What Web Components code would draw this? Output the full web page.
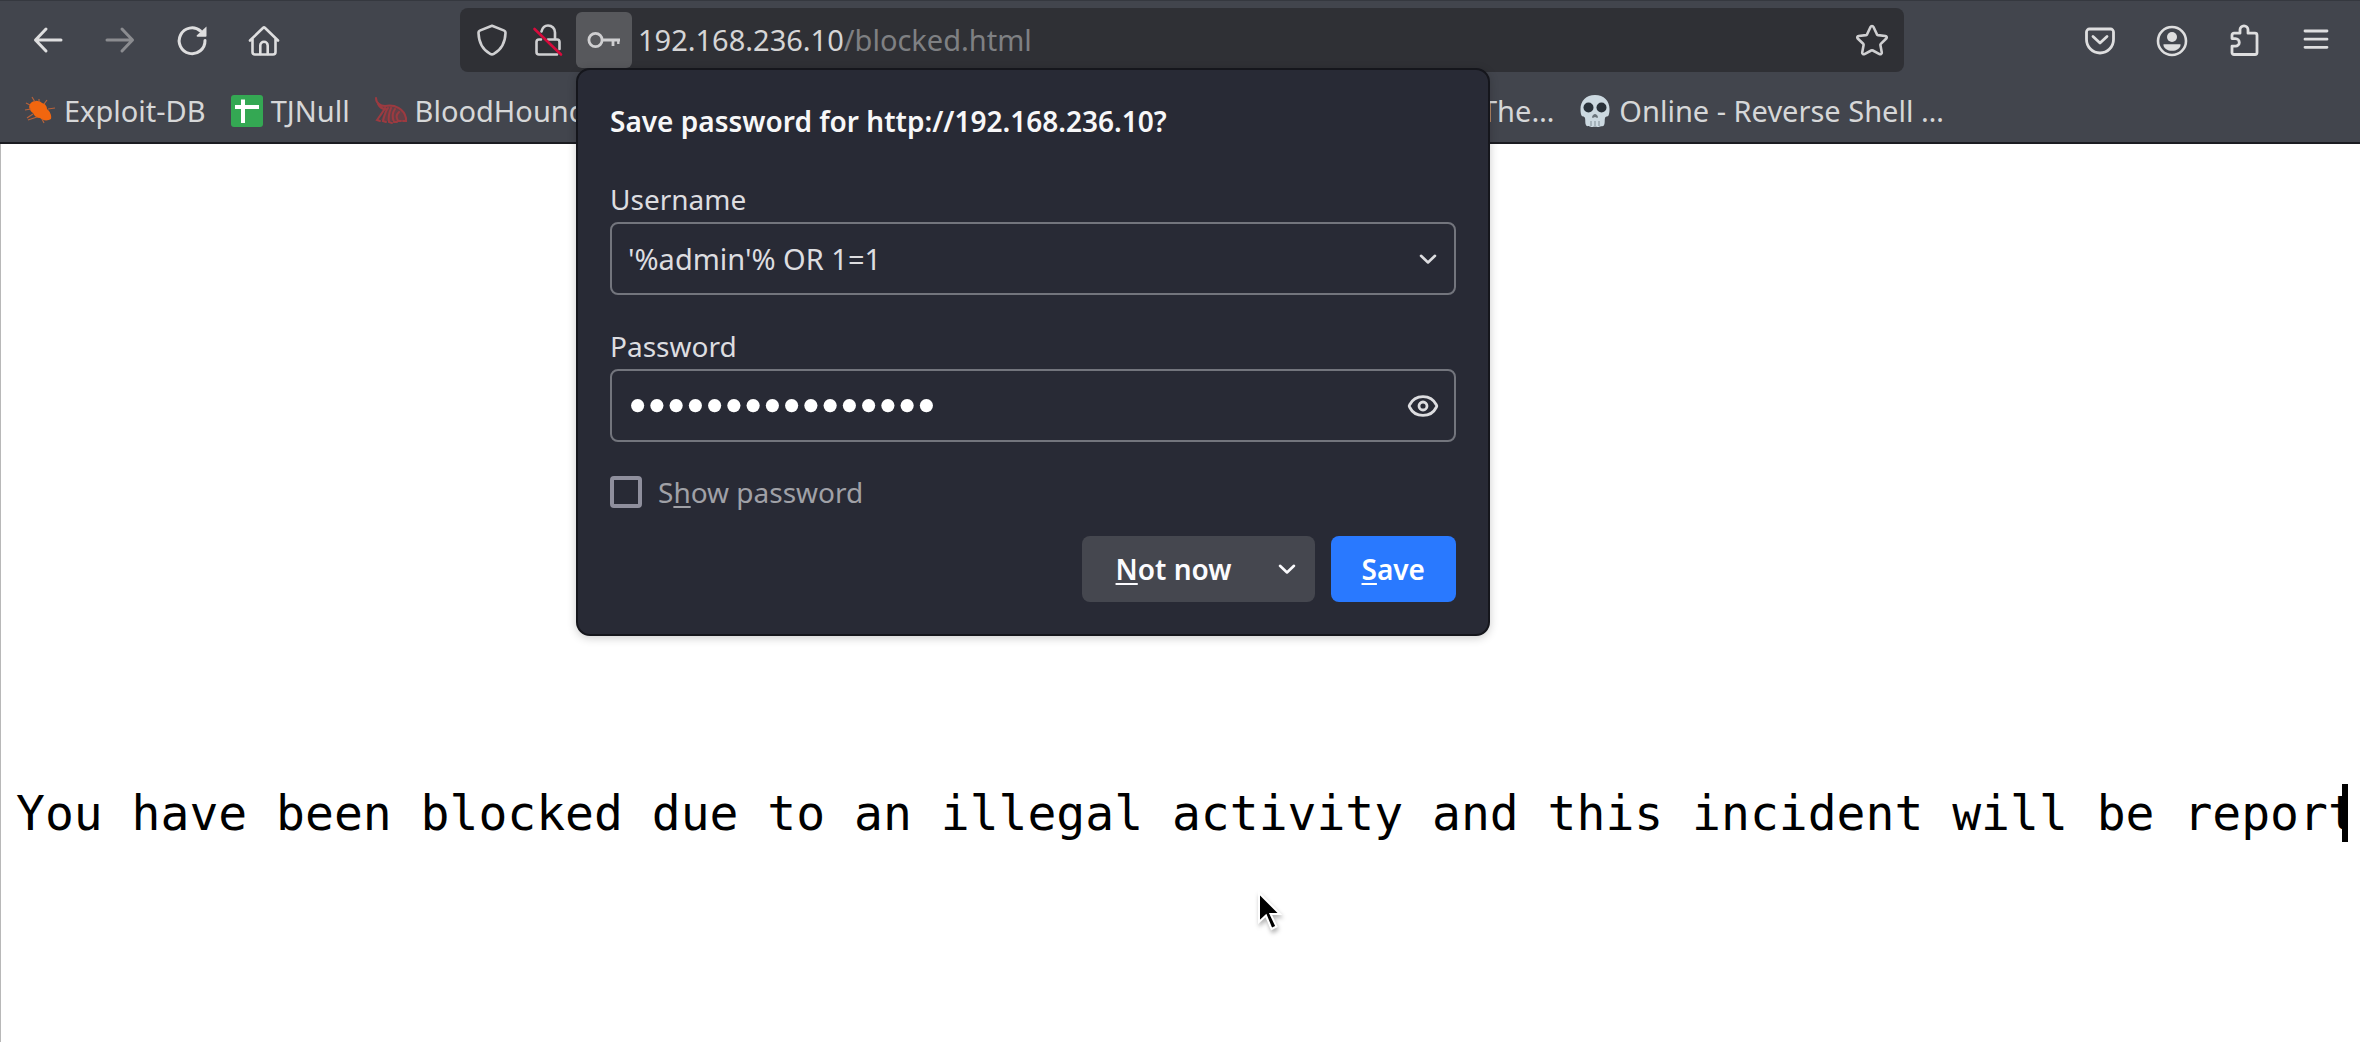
<!DOCTYPE html>
<html lang="en">
<head>
<meta charset="utf-8">
<title>192.168.236.10/blocked.html</title>
<style>
  html, body { margin: 0; height: 100%; }
  body { background: #fff; font-family: "Noto Sans", sans-serif; overflow: hidden; }
</style>
</head>
<body>
<browser-window></browser-window>

<script>
const ICONS = {
  back: '<g fill="none" stroke="currentColor" stroke-width="3" stroke-linecap="round" stroke-linejoin="round"><path d="M3.5 16H29M14 5 3.5 16 14 27"/></g>',
  forward: '<g fill="none" stroke="currentColor" stroke-width="3" stroke-linecap="round" stroke-linejoin="round"><path d="M28.500 16H3M18 5l10.500 11L18 27"/></g>',
  reload: '<path d="M24.500 7A12.900 12.900 0 1 0 29 16.500" fill="none" stroke="currentColor" stroke-width="3" stroke-linecap="round"/><path d="M30.500 2.500v9.500a.8.8 0 0 1-.8.8h-8.200c-.8 0-1.200-.9-.6-1.500z" fill="currentColor"/>',
  home: '<g fill="none" stroke="currentColor" stroke-width="2.600" stroke-linecap="round" stroke-linejoin="round"><path d="M2 16.500 15.200 3.800a1.200 1.200 0 0 1 1.600 0L30 16.500M4.500 15v13a2.500 2.500 0 0 0 2.500 2.500h18a2.500 2.500 0 0 0 2.500-2.500V15"/><path d="M12.300 30V21.500a3.700 3.700 0 0 1 7.400 0V30"/></g>',
  shield: '<path d="M16 1.800 27.700 6.400c1.200.5 1.900 1.300 1.800 2.600-.3 9.500-3.800 16.500-11.700 20.900a3.600 3.600 0 0 1-3.600 0C6.300 25.500 2.800 18.500 2.500 9c-.1-1.300.6-2.100 1.800-2.600z" fill="none" stroke="currentColor" stroke-width="2.600" stroke-linejoin="round"/>',
  lock: '<g fill="none" stroke="currentColor" stroke-width="2.600" stroke-linecap="round"><path d="M9.500 7.500C10.500 3.500 13 1.500 16 1.500c4 0 7 3 7 7V15"/><path d="M9 15.500H7a2.500 2.500 0 0 0-2.500 2.500v10A2.500 2.500 0 0 0 7 30.500h18M16 15.500h9a2.500 2.500 0 0 1 2.500 2.500v7"/></g><path d="M2.500 5 29 30.500" stroke="#d70b3c" stroke-width="2.600" stroke-linecap="round"/>',
  key: '<g fill="none" stroke="currentColor" stroke-width="2.800"><circle cx="7.500" cy="16" r="6.600"/><path d="M14 16h18M25 16v6"/></g><path d="M30.300 16v4" stroke="currentColor" stroke-width="2.400"/>',
  star: '<path d="m14.500 3-3.400 7.300a1.500 1.500 0 0 1-1.100.8l-7.400.9c-1.300.2-1.800 1.600-.9 2.500l5.500 5.300c.4.400.5.800.4 1.300l-1.400 7.300c-.2 1.400 1.100 2.300 2.300 1.700l6.700-3.600a1.700 1.700 0 0 1 1.600 0l6.700 3.600c1.200.6 2.500-.3 2.300-1.700l-1.400-7.300c-.1-.5 0-.9.4-1.300l5.500-5.300c.9-.9.4-2.300-.9-2.500l-7.400-.9a1.500 1.500 0 0 1-1.100-.8L17.500 3c-.6-1.300-2.400-1.300-3 0z" fill="none" stroke="currentColor" stroke-width="2.600" stroke-linejoin="round"/>',
  pocket: '<g fill="none" stroke="currentColor" stroke-width="2.800" stroke-linecap="round" stroke-linejoin="round"><path d="M5.500 5h21a3 3 0 0 1 3 3v7.500a13.500 13.500 0 0 1-27 0V8a3 3 0 0 1 3-3z"/><path d="m9 12.500 7 6.500 7-6.500"/></g>',
  account: '<circle cx="16" cy="17" r="14" fill="none" stroke="currentColor" stroke-width="2.600"/><circle cx="16" cy="13" r="5" fill="currentColor"/><path d="M7.500 20.200h17c.5 4-4 6.600-8.500 6.600s-9-2.600-8.500-6.600z" fill="currentColor"/>',
  puzzle: '<path d="M12 9.200V5.800a4 4 0 0 1 8 0v3.400h7a2 2 0 0 1 2 2v17.300a2 2 0 0 1-2 2H6a2 2 0 0 1-2-2v-6.300h3.500a3.800 3.800 0 0 0 0-7.600H4v-3.400a2 2 0 0 1 2-2z" fill="none" stroke="currentColor" stroke-width="2.800" stroke-linejoin="round"/>',
  menu: '<path d="M5 7h22M5 15.200h22M5 23.300h22" fill="none" stroke="currentColor" stroke-width="2.800" stroke-linecap="round"/>',
  eye: '<g fill="none" stroke="currentColor" stroke-width="2.800"><path d="M2.500 17c-.4-.6-.4-1.400 0-2C5 10 10 6.600 16 6.600s11 3.400 13.500 8.400c.4.600.4 1.400 0 2C27 22 22 25.400 16 25.400S5 22 2.500 17z"/><circle cx="16" cy="16" r="4"/></g>',
  chevron: '<path d="m9 12.800 7 6.700 7-6.700" fill="none" stroke="currentColor" stroke-width="2.600" stroke-linecap="round" stroke-linejoin="round"/>',
  bug: '<path d="M6 9c3-4 9-4 12-1 4 1 5 4 5 6 3 2 5 7 4 10-3 2-8 2-11-1-3 0-6-2-7-5-3-2-5-6-3-9z" fill="#f2660f"/><path d="M11 7 8 2M15 7V4M20 9l3-4M24 14l7-1M6 10 2 8M7 14l-6 1M9 19l-6 4M13 22l-9 3M18 24l2 4" fill="none" stroke="#b8623a" stroke-width="1.200"/>',
  sheet: '<rect width="32" height="32" rx="3" fill="#34a853"/><path d="M12 4.500V28M4 12h24" stroke="#fff" stroke-width="4" fill="none"/>',
  hound: '<path d="M2 4c1 4 4 7 9 7 9-2 18 3 20 12v3H9L6 25l4-9C5 15 2 10 2 4z" fill="#8f3a40" opacity=".45"/><g fill="none" stroke="#9c3a40" stroke-width="2" stroke-linecap="round"><path d="M1 3c0 5 4 8 9 8 10-2 19 3 21 12v3h-3M3 9c2 4 5 5 8 5"/><path d="M10 13c-2 4-5 8-8 12l3 1M13 13c-3 4-4 9-5 13l3 1M16 13c-2 5-3 9-2 14l3 1M20 14c-3 4-3 8-1 13l3 0M24 17c-3 3-3 5-1 9l3 0"/></g>',
  skull: '<path d="M16 0C7 0 1.500 6 1.500 14c0 3 .3 5 1 6.500C3.500 22 5.500 21 6 23c.6 2.500-.2 5 1 7.300C8 32 11 31 11.500 31.700c1 .5 2.500.5 3 0h3c1 .5 2 .5 3 0 1-.7 3.500.3 4.500-1.400 1.200-2.300.4-4.800 1-7.300.5-2 2.500-1 3.500-2.500.7-1.500 1-3.500 1-6.500C30.500 6 25 0 16 0z" fill="#ccd9e1"/><circle cx="9.500" cy="12.500" r="5" fill="#29313a"/><circle cx="22.500" cy="12.500" r="5" fill="#29313a"/><path d="M13 22.500c0-2 2-3.500 3-3.500s3 1.500 3 3.500c-1 1-2-.5-3-.5s-2 1.500-3 .5z" fill="#6a747c"/><path d="M12 26v5M16 26v5M20 26v5" stroke="#8d9aa3" stroke-width="1.200"/>',
};

class UiIcon extends HTMLElement {
  constructor() {
    super();
    this.attachShadow({ mode: 'open' });
  }
  connectedCallback() {
    this.shadowRoot.innerHTML = `
      <style>:host { display: block; flex: none; width: 32px; height: 32px } svg { display: block; width: 100%; height: 100%; overflow: visible }</style>
      <svg viewBox="0 0 32 32" aria-hidden="true">${ICONS[this.getAttribute('name')]}</svg>`;
  }
}
customElements.define('ui-icon', UiIcon);

const define = (name, html) => customElements.define(name, class extends HTMLElement {
  constructor() {
    super();
    const template = document.createElement('template');
    template.innerHTML = html;
    this.attachShadow({ mode: 'open' }).append(template.content.cloneNode(true));
  }
});

customElements.define('tool-button', class extends HTMLElement {
  constructor() {
    super();
    this.attachShadow({ mode: 'open' });
  }
  connectedCallback() {
    this.shadowRoot.innerHTML = `
      <style>
        :host { display: block; flex: none; width: 64px; color: #dededf }
        button { display: flex; align-items: center; justify-content: center; width: 100%; height: 64px; padding: 0; border: 0; border-radius: 8px; background: none; color: inherit }
        button:disabled { color: #8b8c90 }
      </style>
      <button type="button" aria-label="${this.getAttribute('label')}" ${this.hasAttribute('disabled') ? 'disabled' : ''}>
        <ui-icon name="${this.getAttribute('icon')}"></ui-icon>
      </button>`;
  }
});

define('address-bar', `
  <style>
    :host { display: flex; align-items: center; flex: 1; min-width: 0; height: 64px; padding: 0 16px; box-sizing: border-box; border-radius: 8px; background: #2f3035; color: #cfcfd1 }
    button { display: flex; align-items: center; justify-content: center; flex: none; width: 56px; height: 56px; padding: 0; border: 0; border-radius: 6px; background: none; color: inherit }
    .shield { width: 32px; margin-right: 12px }
    .key { background: #57585c }
    a { flex: 1; padding-left: 6px; font-size: 29px; line-height: 40px; color: #7f8083; text-decoration: none; white-space: nowrap }
    span { color: #d5d5d6 }
    .star { width: 32px }
  </style>
  <button class="shield" type="button" aria-label="Tracking protection"><ui-icon name="shield"></ui-icon></button>
  <button type="button" aria-label="Connection not secure"><ui-icon name="lock"></ui-icon></button>
  <button class="key" type="button" aria-label="Saved password"><ui-icon name="key"></ui-icon></button>
  <a href="#"><span>192.168.236.10</span>/blocked.html</a>
  <button class="star" type="button" aria-label="Bookmark this page"><ui-icon name="star"></ui-icon></button>`);

define('nav-toolbar', `
  <style>
    :host { display: flex; justify-content: space-between; gap: 164px; padding: 7px 12px 8px 16px }
    div { display: flex; gap: 8px }
  </style>
  <div>
    <tool-button icon="back" label="Back"></tool-button>
    <tool-button icon="forward" label="Forward" disabled></tool-button>
    <tool-button icon="reload" label="Reload"></tool-button>
    <tool-button icon="home" label="Home"></tool-button>
  </div>
  <address-bar></address-bar>
  <div>
    <tool-button icon="pocket" label="Save to Pocket"></tool-button>
    <tool-button icon="account" label="Account"></tool-button>
    <tool-button icon="puzzle" label="Extensions"></tool-button>
    <tool-button icon="menu" label="Menu"></tool-button>
  </div>`);

customElements.define('bookmark-link', class extends HTMLElement {
  constructor() {
    super();
    this.attachShadow({ mode: 'open' });
  }
  connectedCallback() {
    const icon = this.getAttribute('icon');
    this.shadowRoot.innerHTML = `
      <style>
        :host { display: block; flex: none }
        a { display: flex; align-items: center; gap: 8px; color: #d6d7d8; font-size: 29px; line-height: 40px; text-decoration: none; white-space: nowrap }
      </style>
      <a href="#">${icon ? `<ui-icon name="${icon}"></ui-icon>` : ''}<slot></slot></a>`;
  }
});

define('bookmarks-bar', `
  <style>
    :host { display: flex; align-items: center; height: 62px; padding: 0 24px }
    nav { display: flex; gap: 25px }
    .start { flex: 0 0 1457px }
  </style>
  <nav class="start" aria-label="Bookmarks">
    <bookmark-link icon="bug">Exploit-DB</bookmark-link>
    <bookmark-link icon="sheet">TJNull</bookmark-link>
    <bookmark-link icon="hound">BloodHound</bookmark-link>
  </nav>
  <nav aria-label="More bookmarks">
    <bookmark-link>The…</bookmark-link>
    <bookmark-link icon="skull">Online - Reverse Shell …</bookmark-link>
  </nav>`);

define('save-password-popup', `
  <style>
    :host { display: block; width: 914px; box-sizing: border-box; padding: 33px 32px 32px; border: 2px solid #15161c; border-radius: 14px; background: #282a35; box-shadow: 0 2px 10px rgba(0, 0, 0, .2); color: #dddde0; font-size: 28px; line-height: 36px }
    form { display: flex; flex-direction: column }
    h2 { margin: 0 0 42px; font-size: 28px; font-weight: 600; color: #f7f7f8 }
    .field { display: flex; flex-direction: column; gap: 5px; margin-bottom: 33px }
    .box { display: flex; align-items: center; height: 73px; box-sizing: border-box; padding: 0 10px 0 16px; border: 2px solid #73757d; border-radius: 8px }
    .box.secret { padding-right: 15px }
    .box input { flex: 1; min-width: 0; height: 64px; padding: 0; border: 0; outline: 0; background: none; color: #dddde0; font: 29px/40px "Noto Sans", sans-serif }
    .box input[type=password] { color: #fff; font: 55px/64px "Liberation Serif", serif }
    button { border: 0; padding: 0; background: none; color: inherit; font: inherit }
    .check { display: flex; align-items: center; gap: 16px; margin-bottom: 27px; color: #a0a1a7; line-height: 34px }
    .check input { appearance: none; width: 32px; height: 32px; margin: 0; border: 4px solid #8f8f9d; border-radius: 4px }
    u { text-underline-offset: 3px; text-decoration-thickness: 2px; text-decoration-skip-ink: none }
    .actions { display: flex; justify-content: flex-end; gap: 16px; font-weight: 600; color: #fbfbfe }
    .split { display: flex; border-radius: 8px; background: #45474f }
    .split button, .save { height: 66px; padding: 0 39px 0 34px }
    .split .more { padding: 0 12px 0 0 }
    .save { padding: 0 31px; border-radius: 8px; background: #2979ff; color: #fff }
  </style>
  <form>
    <h2>Save password for http://192.168.236.10?</h2>
    <div class="field">
      <label for="user">Username</label>
      <div class="box"><input id="user" type="text" value="'%admin'% OR 1=1"><button type="button" aria-label="Show usernames"><ui-icon name="chevron"></ui-icon></button></div>
    </div>
    <div class="field">
      <label for="pass">Password</label>
      <div class="box secret"><input id="pass" type="password" value="'%admin'% OR 1=1"><button type="button" aria-label="Reveal password"><ui-icon name="eye"></ui-icon></button></div>
    </div>
    <div class="check"><input id="show" type="checkbox"><label for="show">S<u>h</u>ow password</label></div>
    <div class="actions">
      <div class="split"><button type="button"><u>N</u>ot now</button><button class="more" type="button" aria-label="More options"><ui-icon name="chevron"></ui-icon></button></div>
      <button class="save" type="button"><u>S</u>ave</button>
    </div>
  </form>`);

define('blocked-page', `
  <style>
    :host { display: block; flex: 1; padding: 640px 12px 0 15px; box-sizing: border-box; border-left: 1px solid #b8b8b8; background: #fff; color: #000 }
    p { margin: 0; overflow: hidden; border-right: 6px solid #000; font: 48px/58px "DejaVu Sans Mono", monospace; white-space: nowrap }
  </style>
  <p>You have been blocked due to an illegal activity and this incident will be report</p>`);

define('mouse-pointer', `
  <style>
    :host { display: block; width: 32px; height: 48px; filter: drop-shadow(1px 3px 2px rgba(0, 0, 0, .3)) }
    svg { display: block; width: 100%; height: 100% }
  </style>
  <svg viewBox="0 0 32 48" aria-hidden="true"><path d="M3 4v29l7-6.500 5.500 13.500 5-2.500-6-12.500H24z" fill="#000" stroke="#fff" stroke-width="2"/></svg>`);

define('browser-window', `
  <style>
    :host { position: relative; display: flex; flex-direction: column; min-height: 100vh }
    header { border-top: 1px solid #35383f; border-bottom: 2px solid #1b1c21; background: #42454d }
    save-password-popup { position: absolute; left: 576px; top: 68px }
    mouse-pointer { position: absolute; left: 1256px; top: 889px }
  </style>
  <header>
    <nav-toolbar></nav-toolbar>
    <bookmarks-bar></bookmarks-bar>
  </header>
  <blocked-page></blocked-page>
  <save-password-popup></save-password-popup>
  <mouse-pointer></mouse-pointer>`);
</script>
</body>
</html>
